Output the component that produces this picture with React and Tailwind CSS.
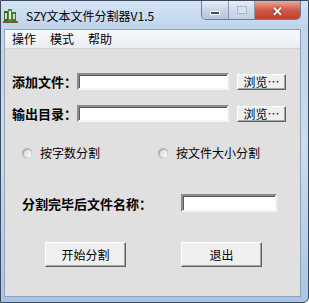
const cjk = "font-['Noto_Sans_CJK_SC','Noto_Sans',sans-serif]"

const Sunken = ({ className }) => (
  <div
    className={`bg-white border-2 border-t-[#8c8c8c] border-l-[#8c8c8c] border-b-[#f4f4f4] border-r-[#f4f4f4] shadow-[inset_1px_1px_0_#5a5a5a] ${className}`}
  />
)

const Raised = ({ className, children }) => (
  <div
    className={`flex items-center justify-center bg-[#efefef] border border-t-white border-l-white border-b-[#5f5f5f] border-r-[#5f5f5f] shadow-[inset_-1px_-1px_0_#a6a6a6] text-[12px] text-black leading-none ${className}`}
  >
    {children}
  </div>
)

const Radio = ({ label }) => (
  <div className="flex items-center gap-[7px]">
    <div className="w-[11px] h-[11px] rounded-full bg-gradient-to-br from-[#9a9a9a] to-[#f2f2f2] flex items-center justify-center">
      <div className="w-[7px] h-[7px] rounded-full bg-gradient-to-br from-[#d8d8d8] to-white" />
    </div>
    <span className="text-[12px] leading-none text-black">{label}</span>
  </div>
)

const AppIcon = () => (
  <svg width="15" height="15" viewBox="0 0 15 15">
    <rect x="1" y="3" width="4" height="11" fill="#2f6b2a" />
    <rect x="5" y="1" width="4" height="13" fill="#4d8f3a" />
    <rect x="9" y="4" width="4" height="10" fill="#3a7a34" />
    <rect x="2" y="5" width="2" height="6" fill="#cfe3b8" />
    <rect x="6" y="3" width="2" height="8" fill="#e6efd4" />
    <rect x="10" y="6" width="2" height="5" fill="#cfe3b8" />
    <rect x="0" y="13" width="15" height="2" fill="#7a5a2a" />
  </svg>
)

export default function App() {
  return (
    <div className={`${cjk} w-[309px] h-[303px] bg-gradient-to-b from-[#bcd4ee] via-[#c9dcf0] to-[#a9c5e6] border border-[#3b4a5c] rounded-br-[6px] flex flex-col overflow-hidden`}>
      {/* title bar */}
      <div className="h-[28px] flex items-start shrink-0 bg-gradient-to-b from-[#d3e3f4] to-[#bed4ec]">
        <div className="flex items-center gap-[8px] pl-[2px] pt-[7px]">
          <AppIcon />
          <span className="text-[12px] leading-none text-black">SZY文本文件分割器V1.5</span>
        </div>
        <div className="ml-auto mr-[7px] flex h-[19px] border border-t-0 border-[#6e7f95] rounded-b-[5px] overflow-hidden">
          <div className="w-[27px] flex items-center justify-center bg-gradient-to-b from-[#e6eef8] via-[#c6d5e8] to-[#b2c6de] border-r border-[#8a9ab0]">
            <div className="w-[10px] h-[4px] bg-[#3c4a5e] border border-white mt-[5px]" />
          </div>
          <div className="w-[26px] flex items-center justify-center bg-gradient-to-b from-[#e6eef8] via-[#cfdbea] to-[#c0d0e4] border-r border-[#8a9ab0]">
            <div className="w-[10px] h-[8px] border border-[#a8b8cc] bg-[#d8e2ee]" />
          </div>
          <div className="w-[45px] flex items-center justify-center bg-gradient-to-b from-[#e9a99a] via-[#cf5a46] to-[#c0402c]">
            <span className="text-white text-[13px] font-bold leading-none [text-shadow:0_0_2px_#4a1a14]">✕</span>
          </div>
        </div>
      </div>

      {/* client area */}
      <div className="ml-[3px] mr-[7px] mb-[5px] flex-1 flex flex-col bg-[#e0e0e0] border border-[#8ea2ba]">
        {/* menu bar */}
        <div className="h-[19px] flex items-center gap-[14px] pl-[7px] bg-gradient-to-b from-[#f8f9fb] to-[#e9edf3] border-b border-[#cfd5dd] text-[12px] leading-none text-black shrink-0">
          <span>操作</span>
          <span>模式</span>
          <span>帮助</span>
        </div>

        <div className="flex flex-col pl-[7px]">
          <div className="flex items-center mt-[24px] h-[17px]">
            <span className="w-[65px] text-[13px] font-bold leading-none text-black">添加文件：</span>
            <Sunken className="w-[152px] h-[17px]" />
            <Raised className="ml-[8px] w-[49px] h-[16px]">浏览…</Raised>
          </div>
          <div className="flex items-center mt-[15px] h-[17px]">
            <span className="w-[65px] text-[13px] font-bold leading-none text-black">输出目录：</span>
            <Sunken className="w-[152px] h-[17px]" />
            <Raised className="ml-[8px] w-[49px] h-[16px]">浏览…</Raised>
          </div>

          <div className="flex items-center mt-[24px] pl-[10px] h-[14px]">
            <div className="w-[136px]">
              <Radio label="按字数分割" />
            </div>
            <Radio label="按文件大小分割" />
          </div>

          <div className="flex items-center mt-[34px] pl-[10px] h-[18px]">
            <span className="w-[159px] text-[13px] font-bold leading-none text-black">分割完毕后文件名称：</span>
            <Sunken className="w-[96px] h-[18px]" />
          </div>

          <div className="flex items-center mt-[30px] pl-[33px] gap-[55px]">
            <Raised className="w-[81px] h-[25px]">开始分割</Raised>
            <Raised className="w-[81px] h-[25px]">退出</Raised>
          </div>
        </div>
      </div>
    </div>
  )
}
